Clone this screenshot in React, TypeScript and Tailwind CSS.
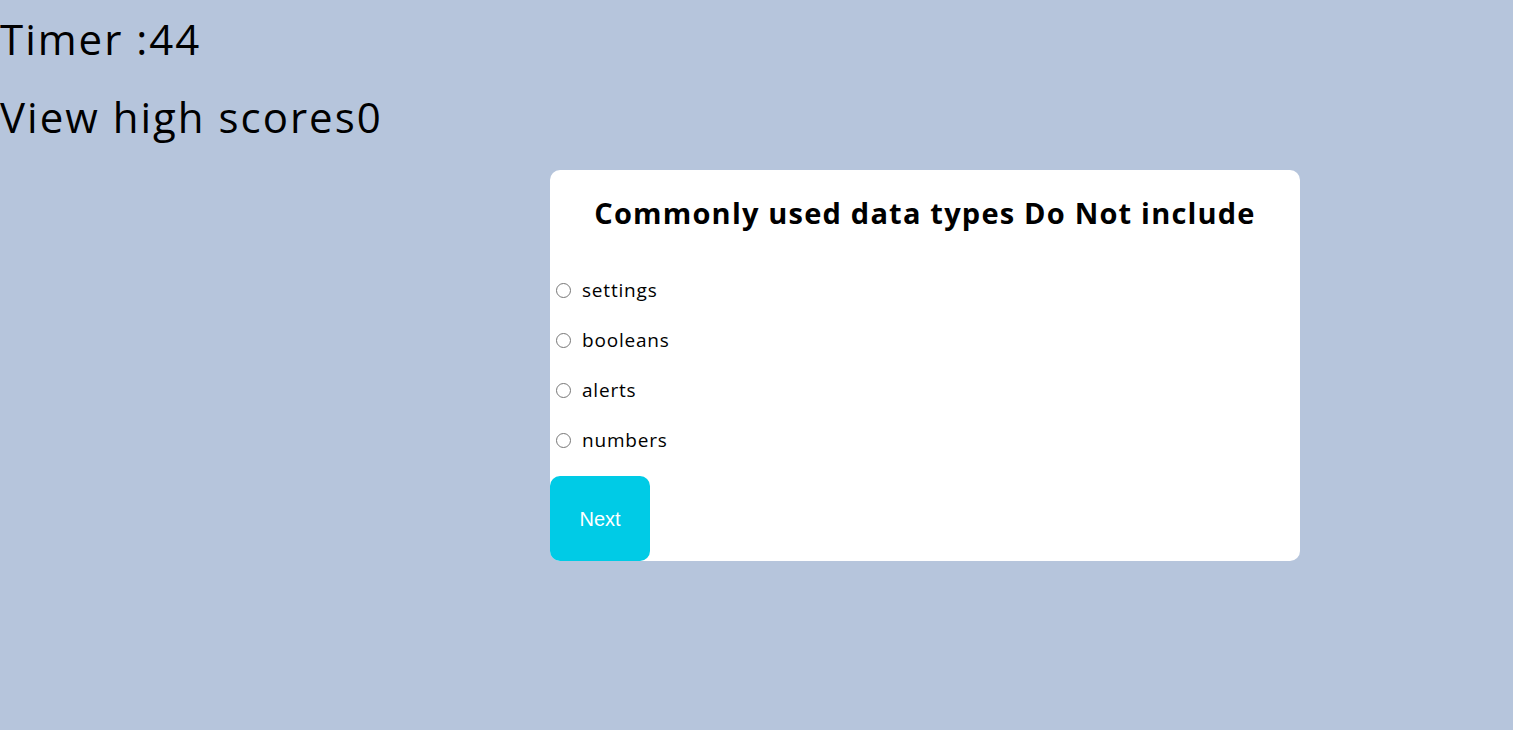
import { useState } from "react";

const choices = ["settings", "booleans", "alerts", "numbers"];

export default function App() {
  const [picked, setPicked] = useState<string | null>(null);

  return (
    <div className="min-h-screen bg-[#b6c5dc] font-['Open_Sans',sans-serif] text-black">
      {/* Header */}
      <div className="text-[42px] leading-[78px] tracking-[2px]">
        <p>Timer :44</p>
        <p>View high scores0</p>
      </div>

      {/* Question card */}
      <div className="ml-[550px] mt-[14px] w-[750px] rounded-[10px] bg-white">
        <h2 className="text-center text-[29px] font-bold leading-[86px] tracking-[1.2px]">
          Commonly used data types Do Not include
        </h2>

        <div className="mt-[9px]">
          {choices.map((c) => (
            <label key={c} className="flex h-[50px] items-center text-[19px] tracking-[0.8px]">
              <input
                type="radio"
                name="answer"
                checked={picked === c}
                onChange={() => setPicked(c)}
                className="ml-[6px] mr-[11px] h-[15px] w-[15px]"
              />
              {c}
            </label>
          ))}
        </div>

        <button className="mt-[11px] h-[85px] w-[100px] rounded-[10px] bg-[#00cbe6] font-['Liberation_Sans',sans-serif] text-[20px] text-white">
          Next
        </button>
      </div>
    </div>
  );
}
